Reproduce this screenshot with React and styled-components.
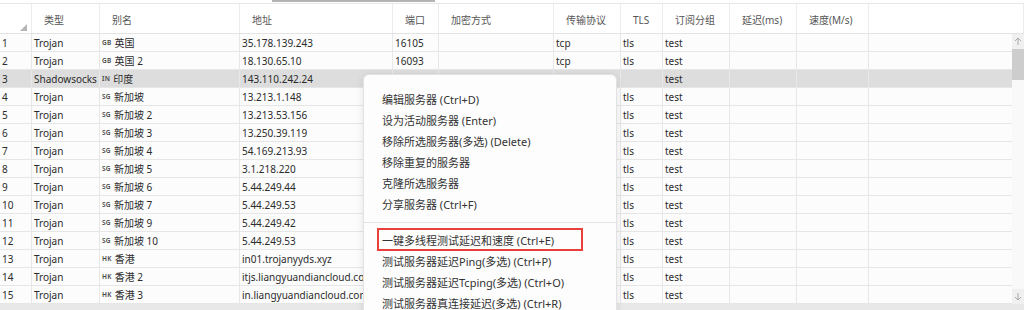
import React from "react";
import styled, { createGlobalStyle, css } from "styled-components";

const COLUMNS = "32px 68px 140px 153px 46px 115px 67px 42px 67px 67px 72px 1fr";

const headers = [
  "",
  "类型",
  "别名",
  "地址",
  "端口",
  "加密方式",
  "传输协议",
  "TLS",
  "订阅分组",
  "延迟(ms)",
  "速度(M/s)",
  "",
];

// port and transport of the rows under the context menu are not visible
const servers = [
  { type: "Trojan", flag: "GB", name: "英国", address: "35.178.139.243", port: "16105", net: "tcp", tls: "tls" },
  { type: "Trojan", flag: "GB", name: "英国 2", address: "18.130.65.10", port: "16093", net: "tcp", tls: "tls" },
  { type: "Shadowsocks", flag: "IN", name: "印度", address: "143.110.242.24", tls: "" },
  { type: "Trojan", flag: "SG", name: "新加坡", address: "13.213.1.148", tls: "tls" },
  { type: "Trojan", flag: "SG", name: "新加坡 2", address: "13.213.53.156", tls: "tls" },
  { type: "Trojan", flag: "SG", name: "新加坡 3", address: "13.250.39.119", tls: "tls" },
  { type: "Trojan", flag: "SG", name: "新加坡 4", address: "54.169.213.93", tls: "tls" },
  { type: "Trojan", flag: "SG", name: "新加坡 5", address: "3.1.218.220", tls: "tls" },
  { type: "Trojan", flag: "SG", name: "新加坡 6", address: "5.44.249.44", tls: "tls" },
  { type: "Trojan", flag: "SG", name: "新加坡 7", address: "5.44.249.53", tls: "tls" },
  { type: "Trojan", flag: "SG", name: "新加坡 9", address: "5.44.249.42", tls: "tls" },
  { type: "Trojan", flag: "SG", name: "新加坡 10", address: "5.44.249.53", tls: "tls" },
  { type: "Trojan", flag: "HK", name: "香港", address: "in01.trojanyyds.xyz", tls: "tls" },
  { type: "Trojan", flag: "HK", name: "香港 2", address: "itjs.liangyuandiancloud.com", tls: "tls" },
  { type: "Trojan", flag: "HK", name: "香港 3", address: "in.liangyuandiancloud.com", tls: "tls" },
];

const menuGroups = [
  [
    { label: "编辑服务器 (Ctrl+D)" },
    { label: "设为活动服务器 (Enter)" },
    { label: "移除所选服务器(多选) (Delete)" },
    { label: "移除重复的服务器" },
    { label: "克隆所选服务器" },
    { label: "分享服务器 (Ctrl+F)" },
  ],
  [
    { label: "一键多线程测试延迟和速度 (Ctrl+E)", marked: true },
    { label: "测试服务器延迟Ping(多选) (Ctrl+P)" },
    { label: "测试服务器延迟Tcping(多选) (Ctrl+O)" },
    { label: "测试服务器真连接延迟(多选) (Ctrl+R)" },
  ],
];

const Arrow = ({ down }) => (
  <svg width="8" height="9" viewBox="0 0 8 9" style={{ transform: down ? "rotate(180deg)" : "none" }}>
    <path d="M4 1 L4 8 M1 4 L4 1 L7 4" stroke="#a9a9a9" strokeWidth="1" fill="none" />
  </svg>
);

const App = () => {
  return (
    <Page>
      <GlobalStyle />
      <TopStrip>
        <TabLine />
      </TopStrip>
      <HeaderRow>
        {headers.map((h, i) => (
          <HeaderCell key={i} corner={i === 0}>
            {h}
          </HeaderCell>
        ))}
      </HeaderRow>
      <Body>
        <Rows>
          {servers.map((s, i) => (
            <Row key={i} selected={i === 2}>
              <Cell>{i + 1}</Cell>
              <Cell>{s.type}</Cell>
              <Cell>
                <Flag>{s.flag}</Flag>
                {s.name}
              </Cell>
              <Cell>{s.address}</Cell>
              <Cell>{s.port}</Cell>
              <Cell />
              <Cell>{s.net}</Cell>
              <Cell>{s.tls}</Cell>
              <Cell>test</Cell>
              <Cell />
              <Cell />
              <Cell last />
            </Row>
          ))}
        </Rows>
        <VScroll>
          <ScrollButton>
            <Arrow />
          </ScrollButton>
          <Thumb />
          <Track />
          <ScrollButton>
            <Arrow down />
          </ScrollButton>
        </VScroll>
      </Body>
      <HScroll />

      <Menu>
        {menuGroups.map((group, gi) => (
          <React.Fragment key={gi}>
            {gi > 0 && <Separator />}
            {group.map((item) => (
              <MenuItem key={item.label} marked={item.marked}>
                {item.label}
              </MenuItem>
            ))}
          </React.Fragment>
        ))}
      </Menu>
    </Page>
  );
};

const GlobalStyle = createGlobalStyle`
  html, body {
    margin: 0;
    padding: 0;
    background: #ffffff;
    overflow: hidden;
  }
  body {
    font-family: "Noto Sans", "Noto Sans CJK SC", sans-serif;
    color: #2b2b2b;
  }
`;

const Page = styled.div`
  position: relative;
  width: 1024px;
  height: 310px;
  overflow: hidden;
  display: flex;
  flex-direction: column;
  background: #ffffff;
`;

const TopStrip = styled.div`
  height: 3px;
  display: flex;
`;

const TabLine = styled.div`
  margin-left: 272px;
  width: 163px;
  height: 2px;
  background: #b4b4b4;
`;

const HeaderRow = styled.div`
  display: grid;
  grid-template-columns: ${COLUMNS};
  height: 29px;
  border-top: 1px solid #e6e6e6;
  border-bottom: 1px solid #e3e3e3;
  background: #ffffff;
`;

const HeaderCell = styled.div`
  position: relative;
  display: flex;
  align-items: center;
  padding: 2px 0 0 12px;
  font-size: 10px;
  color: #555555;
  border-right: 1px solid #ececec;
  white-space: nowrap;

  ${(props) =>
    props.corner &&
    css`
      &::after {
        content: "";
        position: absolute;
        right: 4px;
        bottom: 2px;
        width: 0;
        height: 0;
        border-left: 7px solid transparent;
        border-bottom: 7px solid #b5b5b5;
      }
    `}
`;

const Body = styled.div`
  display: flex;
  height: 270px;
`;

const Rows = styled.div`
  width: 1012px;
  display: flex;
  flex-direction: column;
  background: #fcfcfc;
`;

const Row = styled.div`
  display: grid;
  grid-template-columns: ${COLUMNS};
  height: 18px;
  box-sizing: border-box;
  border-bottom: 1px solid #e6e6e6;
  background: ${(props) => (props.selected ? "#dddddd" : "transparent")};
`;

const Cell = styled.div`
  display: flex;
  align-items: center;
  padding-left: 2px;
  font-size: 10px;
  color: #2b2b2b;
  white-space: nowrap;
  overflow: hidden;
  border-right: ${(props) => (props.last ? "none" : "1px solid #e8e8e8")};
`;

const Flag = styled.span`
  font-size: 6.5px;
  font-weight: 600;
  color: #444444;
  letter-spacing: 0.3px;
  margin-right: 3px;
`;

const VScroll = styled.div`
  width: 12px;
  display: flex;
  flex-direction: column;
  background: #f7f7f7;
`;

const ScrollButton = styled.div`
  height: 15px;
  display: flex;
  align-items: center;
  justify-content: center;
  background: #f0f0f0;
`;

const Thumb = styled.div`
  height: 31px;
  background: #cdcdcd;
`;

const Track = styled.div`
  flex: 1;
  background: #f9f9f9;
`;

const HScroll = styled.div`
  height: 6px;
  background: #e8e8e8;
`;

const Menu = styled.div`
  position: absolute;
  left: 363px;
  top: 74px;
  width: 254px;
  height: 280px;
  box-sizing: border-box;
  padding-top: 14px;
  background: #fdfdfd;
  border: 1px solid #e2e2e2;
  border-radius: 6px;
  box-shadow: 0 2px 8px rgba(0, 0, 0, 0.1);
`;

const MenuItem = styled.div`
  position: relative;
  height: 21px;
  line-height: 21px;
  padding-left: 18px;
  font-size: 11px;
  color: #333333;
  white-space: nowrap;

  ${(props) =>
    props.marked &&
    css`
      &::after {
        content: "";
        position: absolute;
        left: 13px;
        top: -2px;
        width: 206px;
        height: 23px;
        box-sizing: border-box;
        border: 2px solid #e8403a;
      }
    `}
`;

const Separator = styled.div`
  height: 1px;
  margin: 7px 0;
  background: #e4e4e4;
`;

export default App;
